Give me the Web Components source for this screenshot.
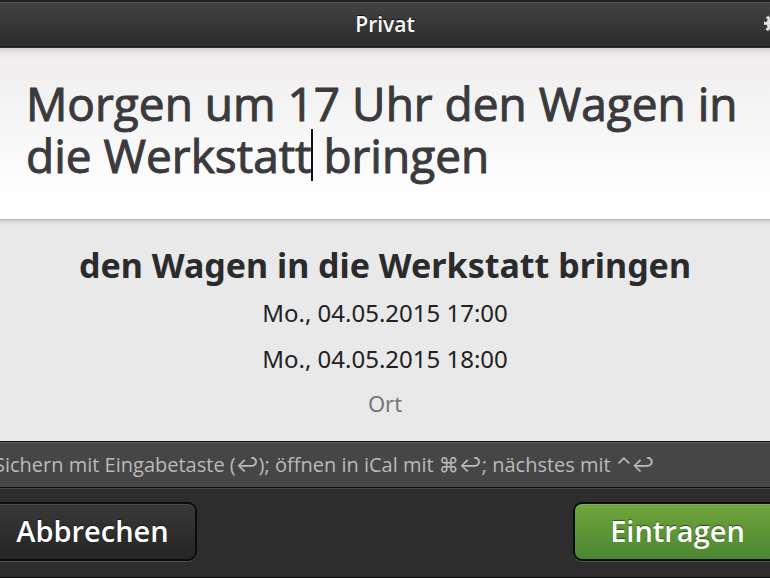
<!DOCTYPE html>
<html lang="de">
<head>
<meta charset="utf-8">
<meta name="viewport" content="width=device-width, initial-scale=1">
<title>Privat</title>
<style>
    body {
        margin: 0;
        overflow: hidden;
        background: #2c2c2c;
        font-family: 'Open Sans', 'Noto Sans', sans-serif;
        --bleed: 30px;
    }
    kbd { font-family: Inter, sans-serif; }
</style>
</head>
<body>
<quick-entry>
    <panel-header slot="header">Privat</panel-header>
    <entry-field caret="43">Morgen um 17 Uhr den Wagen in die Werkstatt bringen</entry-field>
    <event-preview start="Mo., 04.05.2015 17:00" end="Mo., 04.05.2015 18:00">den Wagen in die Werkstatt bringen</event-preview>
    <key-hints slot="footer">Sichern mit Eingabetaste (<kbd>↩</kbd>); öffnen in iCal mit <kbd>⌘↩</kbd>; nächstes mit <kbd>⌃↩</kbd></key-hints>
    <action-bar slot="footer">
        <panel-button>Abbrechen</panel-button>
        <panel-button kind="primary">Eintragen</panel-button>
    </action-bar>
</quick-entry>

<script>
// The panel is a bit wider than the window, both sides run off the edge by --bleed
class QuickEntry extends HTMLElement {
    constructor() {
        super();
        this.attachShadow({ mode: 'open' });
        this.shadowRoot.innerHTML = `
            <style>
                :host {
                    display: flex;
                    flex-direction: column;
                    min-height: 100vh;
                    margin: 0 calc(var(--bleed) * -1);
                    box-sizing: border-box;
                    border-bottom: 2px solid #080808;
                }
                main {
                    flex: 1;
                    background: #e9e9e9;
                }
            </style>
            <slot name="header"></slot>
            <main><slot></slot></main>
            <slot name="footer"></slot>
        `;
    }
}

class PanelHeader extends HTMLElement {
    constructor() {
        super();
        this.attachShadow({ mode: 'open' });
        this.shadowRoot.innerHTML = `
            <style>
                :host {
                    display: block;
                    border-top: 2px solid #222;
                    border-bottom: 2px solid #050505;
                }
                header {
                    display: grid;
                    grid-template-columns: 1fr auto 1fr;
                    align-items: center;
                    height: 44px;
                    box-sizing: border-box;
                    padding: 0 17px 2px;
                    border-top: 1px solid #565656;
                    background: linear-gradient(#434343, #2b2b2b);
                }
                h1 {
                    grid-column: 2;
                    margin: 0;
                    color: #f8f8f8;
                    font-size: 21px;
                    font-weight: 600;
                    line-height: 40px;
                    text-shadow: 0 -1px 0 #111;
                }
                button {
                    justify-self: end;
                    display: block;
                    padding: 0;
                    border: none;
                    background: none;
                    color: #e2e2e2;
                }
                svg { display: block; }
            </style>
            <header>
                <h1><slot></slot></h1>
                <button aria-label="Einstellungen">
                    <svg width="19" height="19" viewBox="0 0 22 22" fill="none" stroke="currentColor">
                        <circle cx="11" cy="11" r="6" stroke-width="4"/>
                        <circle cx="11" cy="11" r="9" stroke-width="4" stroke-dasharray="3.5 3.57" stroke-dashoffset="1.75"/>
                    </svg>
                </button>
            </header>
        `;
    }
}

class EntryField extends HTMLElement {
    constructor() {
        super();
        this.attachShadow({ mode: 'open' });
    }

    connectedCallback() {
        this.shadowRoot.innerHTML = `
            <style>
                :host {
                    display: block;
                    position: relative;
                    border-bottom: 1px solid #b9b9b9;
                    box-shadow: 0 1px 4px #bbb;
                    background: linear-gradient(#d2d0d1, #e9e7e8 5px, #f0eeef 12px, #fff 150px);
                }
                textarea, .mirror {
                    display: block;
                    box-sizing: border-box;
                    width: 100%;
                    margin: 0;
                    padding: 29px 56px 38px;
                    border: none;
                    outline: none;
                    resize: none;
                    overflow: hidden;
                    background: none;
                    color: #3a3a3d;
                    font: 400 46px/52px 'Open Sans', 'Noto Sans', sans-serif;
                    -webkit-text-stroke: 1px #3a3a3d;
                    white-space: pre-wrap;
                    field-sizing: content;
                    caret-color: transparent;
                }
                .mirror {
                    position: absolute;
                    top: 0;
                    visibility: hidden;
                }
                .caret {
                    position: absolute;
                    width: 2px;
                    height: 52px;
                    background: #111;
                }
            </style>
            <textarea rows="2" aria-label="Neuer Eintrag" spellcheck="false"></textarea>
            <div class="caret"></div>
        `;
        const pos = Number(this.getAttribute('caret'));
        this.field = this.shadowRoot.querySelector('textarea');
        this.field.value = this.textContent;
        this.field.setSelectionRange(pos, pos);
        this.placeCaret();

        ['input', 'keyup', 'click'].forEach(type => {
            this.field.addEventListener(type, () => this.placeCaret());
        });
        window.addEventListener('resize', () => this.placeCaret());
    }

    // A textarea can't tell where its caret is, so lay the same text out in a div and measure there
    placeCaret() {
        const mirror = document.createElement('div');
        mirror.className = 'mirror';
        mirror.textContent = this.field.value;
        this.shadowRoot.append(mirror);

        const box = this.getBoundingClientRect();
        const caret = this.shadowRoot.querySelector('.caret');
        const pos = this.field.selectionStart;
        if (pos > 0) {
            const range = document.createRange();
            range.setStart(mirror.firstChild, pos - 1);
            range.setEnd(mirror.firstChild, pos);
            const rect = range.getBoundingClientRect();
            caret.style.left = `${Math.floor(rect.right - box.left)}px`;
            caret.style.top = `${Math.round((rect.top + rect.bottom) / 2 - box.top - 26)}px`;
        } else {
            caret.style.left = '56px';
            caret.style.top = '29px';
        }
        mirror.remove();
    }
}

class EventPreview extends HTMLElement {
    connectedCallback() {
        this.attachShadow({ mode: 'open' });
        this.shadowRoot.innerHTML = `
            <style>
                :host {
                    display: block;
                    padding: 22px 56px 17px;
                    color: #222;
                    font-family: 'Noto Sans', 'Open Sans', sans-serif;
                    font-size: 24px;
                    line-height: 46px;
                    text-align: center;
                }
                h2 {
                    margin: 0 0 2px;
                    color: #2b2b2d;
                    font-size: 34px;
                    font-weight: 700;
                    line-height: 46px;
                }
                time { display: block; }
                input {
                    display: block;
                    width: 100%;
                    height: 42px;
                    margin: 0;
                    padding: 0;
                    border: none;
                    outline: none;
                    background: none;
                    color: #222;
                    font: 22px 'Noto Sans', 'Open Sans', sans-serif;
                    text-align: center;
                }
                input::placeholder { color: #777; }
            </style>
            <h2><slot></slot></h2>
            <time>${this.getAttribute('start')}</time>
            <time>${this.getAttribute('end')}</time>
            <input type="text" aria-label="Ort" placeholder="Ort">
        `;
    }
}

class KeyHints extends HTMLElement {
    constructor() {
        super();
        this.attachShadow({ mode: 'open' });
        this.shadowRoot.innerHTML = `
            <style>
                :host {
                    display: block;
                    border-top: 1px solid #0a0a0a;
                    border-bottom: 1px solid #0a0a0a;
                    background: #464646;
                }
                p {
                    margin: 0;
                    padding: 0 24px;
                    border-top: 1px solid #666;
                    color: #bababa;
                    font-size: 20px;
                    line-height: 43px;
                    white-space: nowrap;
                }
            </style>
            <p><slot></slot></p>
        `;
    }
}

class ActionBar extends HTMLElement {
    constructor() {
        super();
        this.attachShadow({ mode: 'open' });
        this.shadowRoot.innerHTML = `
            <style>
                :host {
                    display: flex;
                    justify-content: space-between;
                    padding: 13px 18px 16px;
                    border-top: 1px solid #444;
                    background: #2d2d2d;
                }
            </style>
            <slot></slot>
        `;
    }
}

class PanelButton extends HTMLElement {
    constructor() {
        super();
        this.attachShadow({ mode: 'open' });
        this.shadowRoot.innerHTML = `
            <style>
                :host {
                    display: block;
                    --top: #383838;
                    --bottom: #252525;
                    --shine: #484848;
                }
                :host([kind="primary"]) {
                    --top: #70a63c;
                    --bottom: #4b8631;
                    --shine: #7fb04c;
                }
                button {
                    display: block;
                    min-width: 209px;
                    height: 59px;
                    padding: 0 0 2px;
                    border: 2px solid #0c0c0c;
                    border-radius: 9px;
                    background: linear-gradient(var(--top), var(--bottom));
                    box-shadow: inset 0 1px 0 var(--shine), 0 1px 0 #505050;
                    color: #fff;
                    font: 600 29px 'Open Sans', 'Noto Sans', sans-serif;
                    text-shadow: 0 -1px 1px rgba(0, 0, 0, 0.5);
                }
            </style>
            <button type="button"><slot></slot></button>
        `;
    }
}

customElements.define('quick-entry', QuickEntry);
customElements.define('panel-header', PanelHeader);
customElements.define('entry-field', EntryField);
customElements.define('event-preview', EventPreview);
customElements.define('key-hints', KeyHints);
customElements.define('action-bar', ActionBar);
customElements.define('panel-button', PanelButton);
</script>
</body>
</html>
